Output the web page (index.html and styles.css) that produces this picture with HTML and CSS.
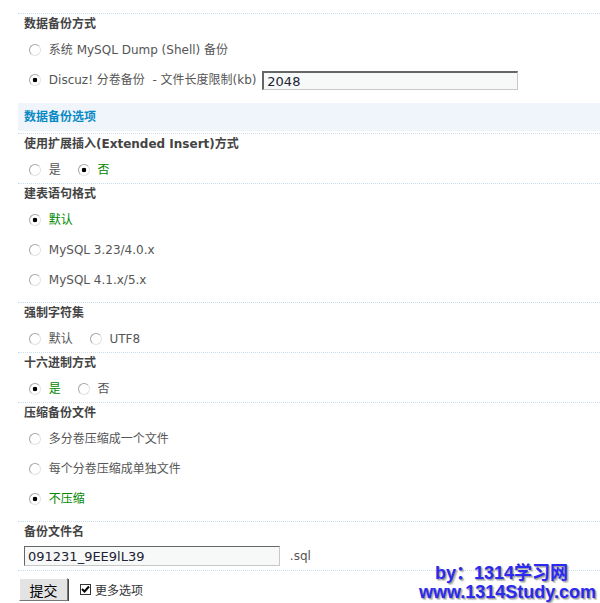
FILE: index.html
```html
<!DOCTYPE html>
<html lang="zh-CN">
<head>
  <meta charset="UTF-8">
  <title>数据备份</title>
  <link rel="stylesheet" href="styles.css">
</head>
<body>
  <form class="backup">
    <div class="block first">
      <div class="title">数据备份方式</div>
      <ul class="opts">
        <li><label><input type="radio" name="type"> 系统 MySQL Dump (Shell) 备份</label></li>
        <li><label class="on"><input type="radio" name="type" checked> Discuz! 分卷备份&nbsp; - 文件长度限制(kb)</label> <input type="text" class="txt size" value="2048"></li>
      </ul>
    </div>

    <div class="band">数据备份选项</div>

    <div class="block">
      <div class="title">使用扩展插入(Extended Insert)方式</div>
      <div class="row">
        <label><input type="radio" name="ext"> 是</label>
        <label class="green"><input type="radio" name="ext" checked> 否</label>
      </div>
    </div>

    <div class="block">
      <div class="title">建表语句格式</div>
      <ul class="opts">
        <li><label class="green"><input type="radio" name="ver" checked> 默认</label></li>
        <li><label><input type="radio" name="ver"> MySQL 3.23/4.0.x</label></li>
        <li><label><input type="radio" name="ver"> MySQL 4.1.x/5.x</label></li>
      </ul>
    </div>

    <div class="block">
      <div class="title">强制字符集</div>
      <div class="row">
        <label><input type="radio" name="charset"> 默认</label>
        <label><input type="radio" name="charset"> UTF8</label>
      </div>
    </div>

    <div class="block">
      <div class="title">十六进制方式</div>
      <div class="row">
        <label class="green"><input type="radio" name="hex" checked> 是</label>
        <label><input type="radio" name="hex"> 否</label>
      </div>
    </div>

    <div class="block">
      <div class="title">压缩备份文件</div>
      <ul class="opts">
        <li><label><input type="radio" name="zip"> 多分卷压缩成一个文件</label></li>
        <li><label><input type="radio" name="zip"> 每个分卷压缩成单独文件</label></li>
        <li><label class="green"><input type="radio" name="zip" checked> 不压缩</label></li>
      </ul>
    </div>

    <div class="block">
      <div class="title">备份文件名</div>
      <div class="file">
        <input type="text" class="txt name" value="091231_9EE9lL39"> <span class="ext">.sql</span>
      </div>
    </div>

    <div class="block last">
      <button type="button" class="btn">提交</button>
      <label class="more">
        <span class="check"><svg width="9" height="9" viewBox="0 0 9 9"><path d="M1 4 L3.5 6.5 L8 1.5" fill="none" stroke="#000" stroke-width="2"/></svg></span>更多选项
      </label>
    </div>
  </form>

  <div class="mark">
    <div class="m1">by：1314学习网</div>
    <div class="m2">www.1314Study.com</div>
  </div>
</body>
</html>
```

FILE: styles.css
```css
body {
  margin: 0;
  background: #fff;
  font-family: Verdana, "DejaVu Sans", "Noto Sans CJK SC", sans-serif;
  font-size: 12px;
  color: #444;
}

.backup {
  padding: 13px 0 0 18px;
}

.block {
  border-top: 1px dotted #cddde9;
}

.title {
  height: 20px;
  line-height: 20px;
  padding-left: 6px;
  font-weight: bold;
  color: #444;
}

ul.opts {
  list-style: none;
  margin: 0;
  padding: 1px 0 7px 11px;
}

.first ul.opts {
  padding-bottom: 8px;
}

ul.opts li {
  height: 30px;
  line-height: 30px;
}

.row {
  padding: 4px 0 0 11px;
  height: 25px;
  line-height: 24px;
}

.row label {
  margin-right: 13px;
}

label {
  color: #555;
}

.green {
  color: #080;
}

input[type="radio"] {
  appearance: none;
  -webkit-appearance: none;
  width: 12px;
  height: 12px;
  margin: 0 4px 0 0;
  border: 1px solid #a6a6a6;
  border-right-color: #e2e2e2;
  border-bottom-color: #e2e2e2;
  border-radius: 50%;
  background: #fff;
  vertical-align: -2px;
}

input[type="radio"]:checked {
  background: radial-gradient(circle, #000 2px, #fff 2.6px);
}

.txt {
  font-family: Verdana, "DejaVu Sans", sans-serif;
  font-size: 13px;
  color: #223;
  height: 19px;
  padding: 0 3px;
  box-sizing: border-box;
  border: 1px solid #c8c8c8;
  border-top: 2px solid #666;
  border-left: 2px solid #666;
  background: #f7f8f8;
  vertical-align: middle;
}

.size {
  width: 256px;
  margin-left: 2px;
}

.band {
  height: 28px;
  line-height: 29px;
  margin-bottom: 2px;
  padding-left: 6px;
  background: #eff5fb;
  color: #0a8ac4;
  font-weight: bold;
}

.file {
  height: 20px;
  padding: 4px 0 4px 6px;
  line-height: 20px;
}

.name {
  width: 256px;
  height: 20px;
  border-width: 1px;
  vertical-align: top;
}

.ext {
  margin-left: 6px;
  color: #555;
}

.last {
  padding-top: 7px;
  display: flex;
  align-items: center;
}

.btn {
  width: 49px;
  height: 23px;
  margin: 0 12px 0 1px;
  padding: 0;
  font-family: "Noto Sans CJK SC", sans-serif;
  font-size: 14px;
  line-height: 20px;
  color: #000;
  background: #e3e3e3;
  border: 1px solid #fff;
  border-right-color: #777;
  border-bottom-color: #777;
  box-shadow: 1px 1px 0 #444;
}

.more {
  display: flex;
  align-items: center;
  color: #333;
}

.check {
  width: 9px;
  height: 9px;
  border: 1px solid #333;
  margin-right: 4px;
  display: flex;
}

.mark {
  position: absolute;
  right: 4px;
  top: 564px;
  text-align: center;
  font-family: "Liberation Sans", "Noto Sans CJK SC", sans-serif;
  font-weight: bold;
  font-size: 18px;
  line-height: 19px;
  color: #2a2af2;
  text-shadow: 1px 1px 1px #999, 2px 2px 1px #ccc;
}

.m1 {
  padding-right: 12px;
}
```
